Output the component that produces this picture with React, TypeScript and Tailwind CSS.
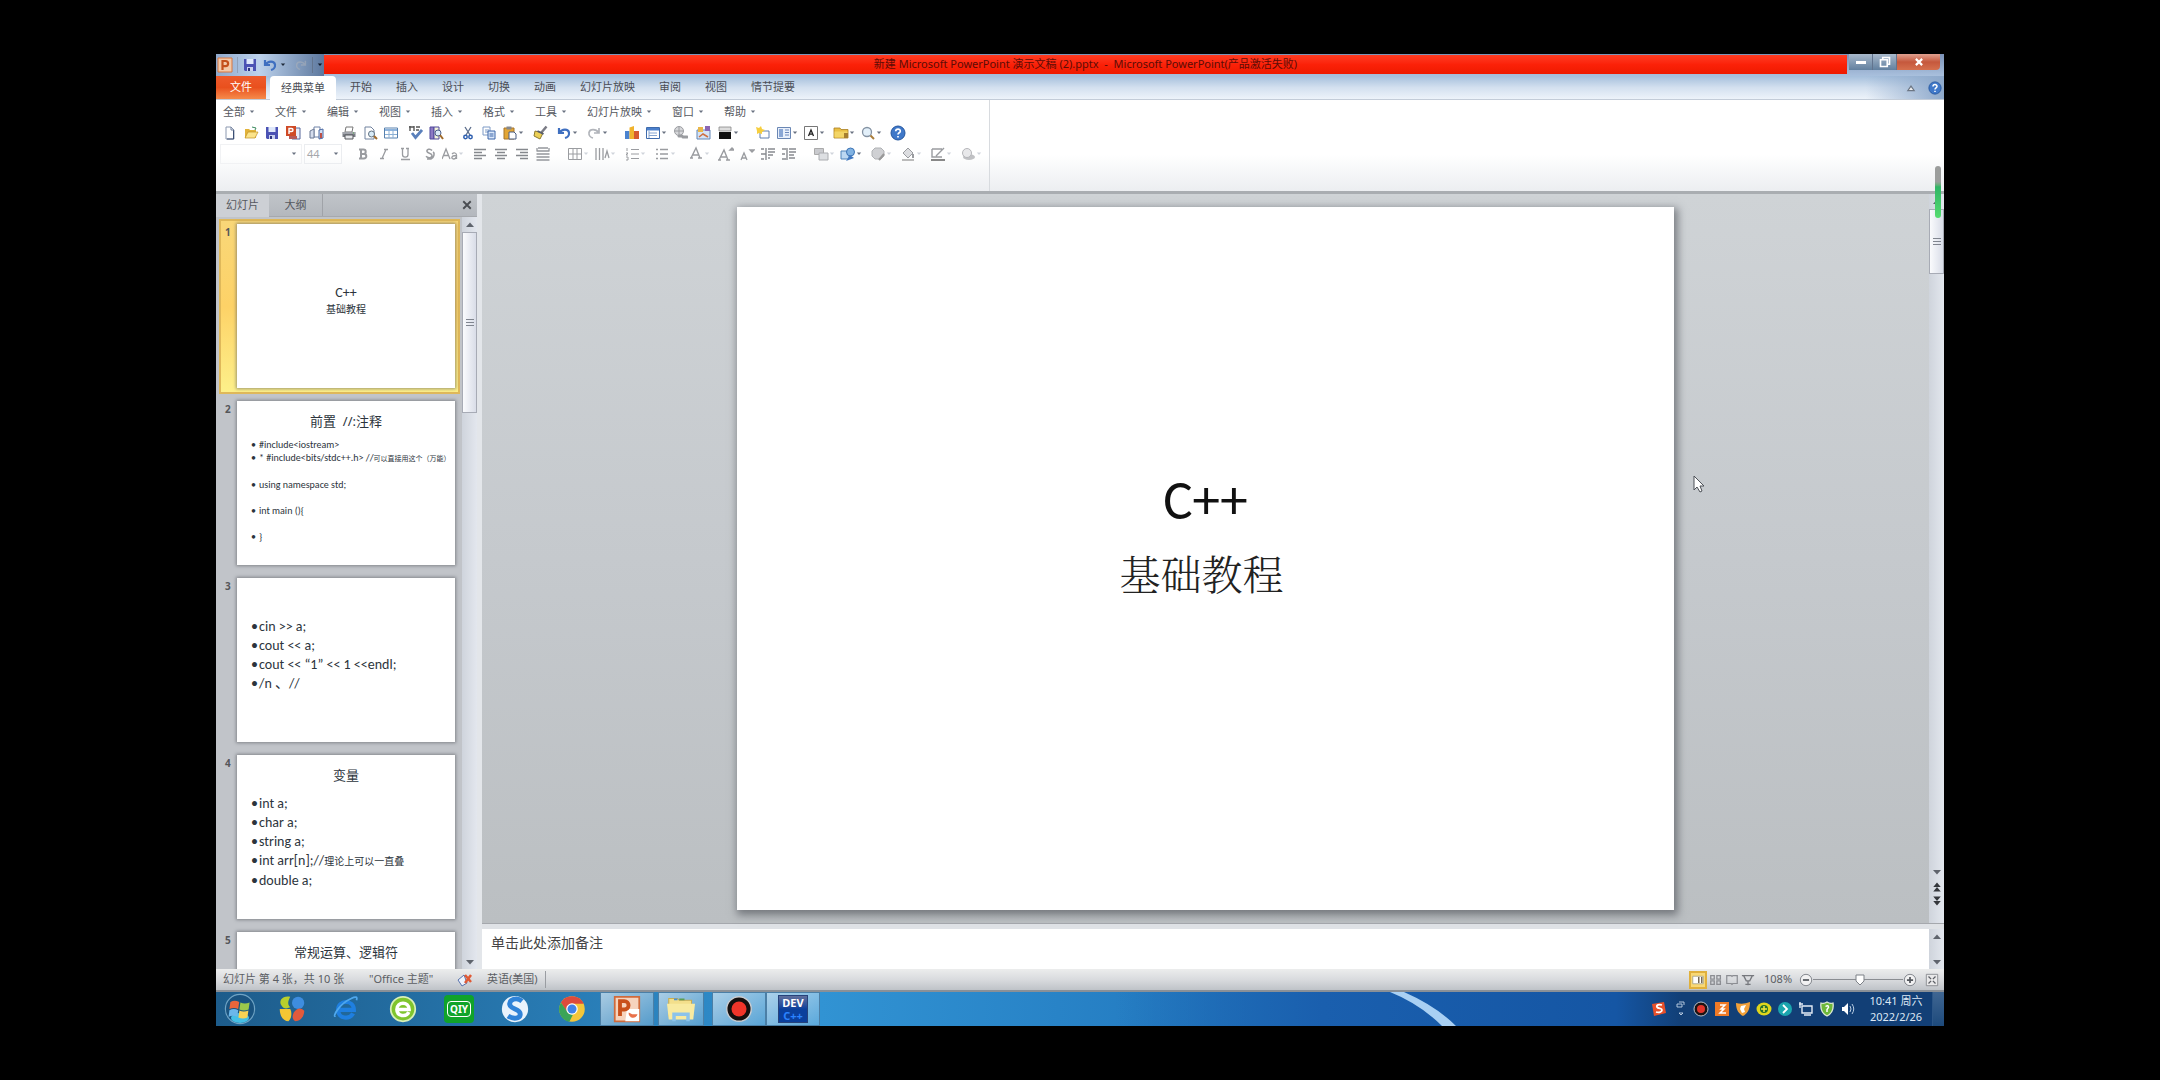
import React from "react";

type Kids = { children?: React.ReactNode };

/* ---------- small drawing helpers ---------- */

function Svg({ children, className = "h-4 w-4" }: Kids & { className?: string }) {
  return (
    <svg viewBox="0 0 16 16" className={`${className} block shrink-0`} fill="none" aria-hidden="true">
      {children}
    </svg>
  );
}

function Caret({ className = "text-gray-500" }: { className?: string }) {
  return (
    <svg viewBox="0 0 6 4" className={`block h-1 w-1.5 shrink-0 ${className}`} aria-hidden="true">
      <path d="M0.8 0.5h4.400L3 3z" fill="currentColor" />
    </svg>
  );
}

const g = "#9a9ca0";

const icons: Record<string, React.ReactNode> = {
  new: <><path d="M4 2h5l3 3v9H4z" fill="#fff" stroke="#8c99b0" /><path d="M11.5 5v9H5" stroke="#3c4f74" /><path d="M9 2v3h3" stroke="#6f7f9c" /></>,
  open: <><path d="M2 4h4l1 1h6v8H2z" fill="#e2b33a" /><path d="M2 13l3-6h10l-3 6z" fill="#fbe38a" stroke="#c08f21" strokeWidth=".7" /><path d="M9 2l4 1-1 2" stroke="#3c8a5e" /></>,
  save: <><path d="M2 2h12v12H3l-1-1z" fill="#4b52b4" /><path d="M4.500 2h7v5h-7z" fill="#dfe8fb" /><path d="M5 10h6v4H5z" fill="#c9d1ee" /><path d="M6 11h2v3H6z" fill="#2d3580" /></>,
  ppt: <><path d="M7 3h8v11H7z" fill="#e7ecf8" stroke="#56679a" /><path d="M1 1h10v10H1z" fill="#cf4a26" /><path d="M4 9V3.500h2.500a1.500 1.500 0 010 3H4" stroke="#fff" strokeWidth="1.400" /><path d="M4 11h8v3H4z" fill="#b65a58" /></>,
  publish: <><path d="M5 2h6v10H5z" fill="#fff" stroke="#7084a8" /><path d="M1 6l4-2v9H1z" fill="#d5dded" stroke="#6a7893" /><path d="M10 5l4-1v9l-4 1z" fill="#d2dff4" stroke="#4a68a3" /><path d="M12 8v5" stroke="#bd5046" strokeWidth="2" /></>,
  print: <><path d="M5 2h7l-1 5H4z" fill="#fff" stroke="#777" /><path d="M1.500 7h13v5h-13z" fill="#7b7e86" /><path d="M2 8h12" stroke="#c8cad0" /><path d="M4 10h8v4H4z" fill="#e7e8eb" stroke="#56585d" /><path d="M12 8h1" stroke="#53a84e" /></>,
  preview: <><path d="M3 2h6l3 3v9H3z" fill="#fff" stroke="#71829e" /><circle cx="9.500" cy="9" r="3" fill="#d9ecf8" stroke="#5f6f80" /><path d="M12 11l3 3" stroke="#a06a2a" strokeWidth="2" /></>,
  table: <><path d="M1.500 3h13v10h-13z" fill="#fff" stroke="#5680ae" /><path d="M2 4h12v2H2z" fill="#8eb4de" /><path d="M2 9.500h12M6 4v9M10 4v9" stroke="#8bb0d5" /></>,
  spell: <><path d="M2 2h5M3 1v5M7 1v5M9 2h4M9 5h3" stroke="#555" strokeWidth="1.400" /><path d="M5 8l3.500 4.500L15 5" stroke="#5a80bb" strokeWidth="2.800" /></>,
  research: <><path d="M2 2h4v12H2z" fill="#8c79c3" stroke="#51489b" /><path d="M6 2h5v12H6z" fill="#f3f3d9" stroke="#51489b" /><circle cx="10" cy="8" r="3" fill="#ddebfa" stroke="#4c5f88" /><path d="M12 10l3 4" stroke="#a06a2a" strokeWidth="2" /></>,
  cut: <><path d="M5 2l5 8M11 2L6 10" stroke="#5b6d8b" strokeWidth="1.300" /><circle cx="5.500" cy="12" r="1.700" stroke="#2f60b0" strokeWidth="1.500" /><circle cx="10.500" cy="12" r="1.700" stroke="#2f60b0" strokeWidth="1.500" /></>,
  copy: <><path d="M2 2h7v8H2z" fill="#fff" stroke="#7c9ac6" /><path d="M4 5h4M4 7h4" stroke="#7c9ac6" /><path d="M7 6h7v8H7z" fill="#dbe8fa" stroke="#3a64a8" /><path d="M8.500 9h4M8.500 11h4" stroke="#3a64a8" /></>,
  paste: <><path d="M2 3h10v11H2z" fill="#e3a634" stroke="#a6742a" /><path d="M4.500 1.500h5v3h-5z" fill="#85898f" /><path d="M7 7h5l2 2v5H7z" fill="#fff" stroke="#4a5d80" /></>,
  brush: <><path d="M14.500 1.500L9 8" stroke="#7a7b85" strokeWidth="2.500" /><path d="M3 6l8 2-3 6-6-3z" fill="#ecd056" stroke="#8c7a2e" /><path d="M5.500 6l6 3" stroke="#555b70" strokeWidth="1.800" /></>,
  undo: <path d="M3 3v5h5M3.500 7.500C6 4 12 3.500 13 7.500c.5 3-2 5-4 5.500" stroke="#3f6fc0" strokeWidth="2.200" />,
  redo: <path d="M13 3v5H8M12.500 7.500C10 4 4 3.500 3 7.500c-.5 3 2 5 4 5.500" stroke="#b1b4ba" strokeWidth="1.700" />,
  chart: <><path d="M1 6h4.500v8H1z" fill="#4a83cf" /><path d="M5.500 2.500l4.500-1.500v13H5.500z" fill="#f0b32d" /><path d="M10 6h5v8h-5z" fill="#d65a2e" /></>,
  table2: <><path d="M1.500 2.500h13v11h-13z" fill="#fff" stroke="#3e6bac" /><path d="M2 3h12v2.500H2z" fill="#4b80cc" /><path d="M4 8h8M4 10.500h8M4 6v7" stroke="#86a5d1" /></>,
  link: <><circle cx="7" cy="6" r="4.500" fill="#d6d7da" stroke={g} /><path d="M3 6h8M7 2v8" stroke={g} /><path d="M7 11h3m1 1h4" stroke={g} strokeWidth="3" strokeLinecap="round" /></>,
  design: <><path d="M1 5h13v9H1z" fill="#d5e4f7" stroke="#6286b5" /><path d="M2 2h5v5H2z" fill="#e9b74a" /><path d="M9 1h5v5H9z" fill="#8b66b4" /><path d="M3 12l4-3 5 3" stroke="#cd7043" strokeWidth="1.500" /></>,
  color: <><path d="M2 2h12v4H2z" fill="#ddd" stroke="#888" strokeWidth=".8" /><path d="M2 7h12v7H2z" fill="#111" /></>,
  newslide: <><path d="M5 6h9v7H5z" fill="#fff" stroke="#5e7fae" /><path d="M1 2l3 1 2-2 1 3 3 1-3 2 0 2-3-1-2 1 0-3z" fill="#f6ce3e" /></>,
  layout: <><path d="M1.500 2.500h13v11h-13z" fill="#e9f0fb" stroke="#6a87b4" /><path d="M3 4h4v8H3z" fill="#8aa7d5" /><path d="M9 5h4M9 7.500h4M9 10h4" stroke="#6c88bb" /></>,
  textbox: <><path d="M1.500 1.500h13v13h-13z" fill="#fff" stroke="#777" /><path d="M5.500 11L8 5l2.500 6M6.500 9.200h3" stroke="#222" strokeWidth="1.300" /></>,
  folder: <><path d="M1 3h6l1 1.500h7V13H1z" fill="#e9bf44" stroke="#a97f22" strokeWidth=".8" /><path d="M1.500 6.500h13v6h-13z" fill="#f3d566" /><path d="M11 8h4v5h-4z" fill="#a77f2f" /></>,
  zoom: <><circle cx="7" cy="7" r="4.500" fill="#e3f0fa" stroke="#8492a3" strokeWidth="1.300" /><path d="M10.500 10.500L14 14" stroke="#a97c3a" strokeWidth="2" /></>,
  help: <><circle cx="8" cy="8" r="7" fill="#3f78c9" stroke="#24569f" /><path d="M5.700 6.300C5.800 3.300 10.400 3.500 10.300 6.200 10.200 7.800 8 7.800 8 9.600M8 11v1.500" stroke="#fff" strokeWidth="1.700" /></>,
  bold: <path d="M4 3.500h4.500a2.100 2.100 0 010 4.400H5.500M5.500 7.900H9a2.200 2.200 0 010 4.600H4M6 3.500v9" stroke={g} strokeWidth="2" />,
  italic: <path d="M8 3.500h4M4 12.500h4M10 3.500l-4 9" stroke={g} strokeWidth="1.300" />,
  underline: <path d="M4 2.500h3M9 2.500h3M5.500 3v5.500c0 3.500 5.500 3.500 5.500 0V3M4 13.500h9" stroke={g} strokeWidth="1.300" />,
  shadow: <path d="M11 4.500C9 2 5.500 3.500 6 5.500c.5 2 5 1.500 5 4 0 2.500-4 3-6 .8M12 6c2 1 1 6-2 7H6" stroke={g} strokeWidth="1.500" />,
  aa: <path d="M0 13L4 3l4 10M1.500 9.500h5M10 8c2-2 4.500-1 4.500 1v4M14 9.500c-5 0-5 3.500-2.500 3.500 1.500 0 2.500-1 2.500-2" stroke={g} strokeWidth="1.300" />,
  left: <path d="M2 3.500h12M2 6.500h8M2 9.500h12M2 12.500h8" stroke="#85888d" strokeWidth="1.300" />,
  center: <path d="M2 3.500h12M4 6.500h8M2 9.500h12M4 12.500h8" stroke="#85888d" strokeWidth="1.300" />,
  right: <path d="M2 3.500h12M6 6.500h8M2 9.500h12M6 12.500h8" stroke="#85888d" strokeWidth="1.300" />,
  spread: <path d="M3 2h10M1.500 5h13M1.500 8h13M1.500 11h13M1.500 14h13M2 2v3M14 2v3" stroke="#94979c" strokeWidth="1.300" />,
  cells: <><path d="M1.500 2.500h13v11h-13zM1.500 8h13M6 2.500v11M10 2.500v11" stroke={g} /></>,
  columns: <path d="M2 2v12M5.500 2v12M9 2v12M11 12l2-7 2 7" stroke={g} strokeWidth="1.300" />,
  numbers: <path d="M3 2v3M2 7h2l-2 2h2M2 11h2v3H2M7 3.500h8M7 8h8M7 12.500h8" stroke={g} />,
  bullets: <path d="M2 3.500h2M2 8h2M2 12.500h2M6 3.500h8M6 8h8M6 12.500h8" stroke={g} strokeWidth="1.300" />,
  fontA: <path d="M3 12L8 2l4 10M5 9h6M2 12h3M10 12h4" stroke={g} strokeWidth="1.400" />,
  grow: <path d="M1 14L6 4l4 10M3 11h6M0 14h3M8 14h4M12 4h4l-2-2z" stroke={g} strokeWidth="1.400" />,
  shrink: <path d="M2 14l3-7 3 7M3 12h4M11 4h4l-2 2z" stroke={g} strokeWidth="1.300" />,
  outdent: <path d="M1 3h3M1 8h5M1 13h3M8 3h7M8 6h7M8 9h5M8 12h2M6 2v12" stroke="#888b90" strokeWidth="1.400" />,
  indent: <path d="M1 3h4M1 8h3M1 13h4M8 3h7M8 6h7M8 9h5M8 12h6M6 2v12" stroke="#888b90" strokeWidth="1.400" />,
  arrange: <><path d="M1.500 2.500h9v6h-9z" fill="#c9cace" stroke="#aaa" /><path d="M6 7h9v7H6z" fill="#dddfe2" stroke="#aaacb0" /></>,
  shapes: <><path d="M1 5h8v8H1z" fill="#bcd8f2" stroke="#4f83b9" /><circle cx="10.500" cy="6" r="4" fill="#82b3e2" stroke="#3d74b5" /><path d="M6 15l4-6 4 3z" fill="#3f77c0" /></>,
  styles: <><path d="M5 2h6l3 3v5l-3 3H5l-3-3V5z" fill="#cfd0d3" stroke="#b0b2b5" /><path d="M9 14l5-6" stroke="#999" strokeWidth="2" /></>,
  fill: <><path d="M8 2l5 5-5 5-5-5z" fill="#dcdde0" stroke={g} /><path d="M13 8v4" stroke={g} strokeWidth="2" /><path d="M2 14h12" stroke="#bbb" strokeWidth="2" /></>,
  outline: <><path d="M2 3h10M2 3v8h10M6 10l8-8" stroke={g} strokeWidth="1.400" /><path d="M1 14h14" stroke="#888" strokeWidth="2" /></>,
  effects: <><ellipse cx="9" cy="11" rx="6" ry="3" fill="#c0c1c4" /><circle cx="7" cy="7" r="4.500" fill="#e8e8ea" stroke="#b5b6ba" /></>,
};

type Tool = [name: string, label: string, gap: string, caret?: boolean];

const row1: Tool[] = [
  ["new", "新建", ""], ["open", "打开", "ml-[5px]"], ["save", "保存", "ml-[5px]"], ["ppt", "另存为", "ml-[5px]"], ["publish", "发布", "ml-2"],
  ["print", "打印", "ml-4"], ["preview", "打印预览", "ml-[5px]"], ["table", "表格", "ml-[5px]"], ["spell", "拼写检查", "ml-2"], ["research", "信息检索", "ml-[5px]"],
  ["cut", "剪切", "ml-4"], ["copy", "复制", "ml-[5px]"], ["paste", "粘贴", "ml-[5px]", true], ["brush", "格式刷", "ml-2"],
  ["undo", "撤消", "ml-2", true], ["redo", "恢复", "ml-2", true],
  ["chart", "图表", "ml-4"], ["table2", "插入表格", "ml-[5px]", true], ["link", "超链接", "ml-[5px]"], ["design", "幻灯片设计", "ml-2"], ["color", "颜色", "ml-[5px]", true],
  ["newslide", "新幻灯片", "ml-4"], ["layout", "版式", "ml-[5px]", true], ["textbox", "文本框", "ml-[5px]", true], ["folder", "文件夹", "ml-2", true], ["zoom", "显示比例", "ml-[5px]", true], ["help", "帮助", "ml-2"],
];

const row2: Tool[] = [
  ["bold", "加粗", ""], ["italic", "倾斜", "ml-[5px]"], ["underline", "下划线", "ml-[5px]"], ["shadow", "阴影", "ml-2"], ["aa", "更改大小写", "ml-[5px]", true],
  ["left", "左对齐", "ml-2"], ["center", "居中", "ml-[5px]"], ["right", "右对齐", "ml-[5px]"], ["spread", "分散对齐", "ml-[5px]"],
  ["cells", "对齐文本", "ml-4", true], ["columns", "文字方向", "ml-[5px]", true], ["numbers", "编号", "ml-2", true], ["bullets", "项目符号", "ml-2", true],
  ["fontA", "字体颜色", "ml-3", true], ["grow", "增大字号", "ml-2"], ["shrink", "减小字号", "ml-[5px]"], ["outdent", "减少缩进", "ml-[5px]"], ["indent", "增加缩进", "ml-[5px]"],
  ["arrange", "排列", "ml-4", true], ["shapes", "形状", "ml-[5px]", true], ["styles", "快速样式", "ml-2", true], ["fill", "形状填充", "ml-2", true], ["outline", "形状轮廓", "ml-2", true], ["effects", "形状效果", "ml-2", true],
];

function ToolButton({ tool, caretClass }: { tool: Tool; caretClass: string }) {
  const [name, label, gap, caret] = tool;
  return (
    <button type="button" aria-label={label} className={`flex shrink-0 items-center ${gap}`}>
      <Svg>{icons[name]}</Svg>
      {caret && <Caret className={caretClass} />}
    </button>
  );
}

/* ---------- title bar and ribbon ---------- */

function TitleBar() {
  return (
    <header className="flex h-[22px] shrink-0 bg-gradient-to-b from-[#7c93b8] to-[#a9c0dd]">
      <div className="flex w-[108px] shrink-0 items-center bg-gradient-to-r from-[#8fa9cc] via-[#bdd2ec] via-40% to-[#5d789e]">
        <Svg className="ml-px h-4 w-4">
          <path d="M1 1h14v14H1z" fill="#f3c9a9" stroke="#d9773e" />
          <path d="M5.500 13V4h3a2.600 2.600 0 010 5.200h-3" stroke="#c4501c" strokeWidth="2.200" />
        </Svg>
        <button type="button" aria-label="保存" className="ml-1 border-l border-slate-400 pl-1"><Svg>{icons.save}</Svg></button>
        <button type="button" aria-label="撤消" className="ml-1 flex items-center gap-0.5"><Svg>{icons.undo}</Svg><Caret className="text-gray-800" /></button>
        <button type="button" aria-label="恢复" className="ml-2 opacity-50"><Svg className="h-3.5 w-3.5">{icons.redo}</Svg></button>
        <button type="button" aria-label="自定义快速访问工具栏" className="ml-1 flex h-4 items-center border-l border-slate-500 pl-1"><Caret className="text-gray-900" /></button>
      </div>
      <h1 className="my-px mb-0.5 flex min-w-0 flex-1 items-center justify-center overflow-hidden whitespace-pre bg-gradient-to-b from-[#ff3a20] via-[#fb2108] to-[#ee1a00] text-[11px] text-[#5c0c06]">
        新建 Microsoft PowerPoint 演示文稿 (2).pptx  -  Microsoft PowerPoint(产品激活失败)
      </h1>
      <div className="flex h-4 w-[97px] shrink-0 pl-0.5 pr-1">
        <button type="button" aria-label="最小化" className="flex w-6 items-center justify-center border-r border-slate-500 bg-gradient-to-b from-[#a9b9cb] to-[#62809f]">
          <span className="h-[3px] w-2.5 bg-white" />
        </button>
        <button type="button" aria-label="还原" className="flex w-6 items-center justify-center border-r border-slate-500 bg-gradient-to-b from-[#a9b9cb] to-[#62809f]">
          <Svg className="h-3 w-3"><path d="M5 5V2h9v9h-3M2 5h9v9H2z" stroke="#fff" strokeWidth="2.200" /></Svg>
        </button>
        <button type="button" aria-label="关闭" className="flex flex-1 items-center justify-center rounded-br bg-gradient-to-b from-[#dfa08f] via-[#c5583d] to-[#d5704e]">
          <Svg className="h-2.5 w-2.5"><path d="M3 3l10 10M13 3L3 13" stroke="#fff" strokeWidth="3.500" /></Svg>
        </button>
      </div>
    </header>
  );
}

const tabs = ["开始", "插入", "设计", "切换", "动画", "幻灯片放映", "审阅", "视图", "情节提要"];
const menus = ["全部", "文件", "编辑", "视图", "插入", "格式", "工具", "幻灯片放映", "窗口", "帮助"];

function Ribbon() {
  return (
    <>
      <nav className="flex h-6 shrink-0 items-stretch border-b border-[#c3ccd8] bg-gradient-to-b from-[#a5bfdc] via-[#d3e0ef] to-[#edf3fa] text-[11px] text-[#4a4d55]">
        <button type="button" className="w-[50px] bg-gradient-to-b from-[#ee5a2b] via-[#e9501d] to-[#f58a4a] text-white">文件</button>
        <button type="button" className="-mb-px ml-1 w-[66px] rounded-t-sm bg-white">经典菜单</button>
        <div className="ml-[14px] flex flex-1 gap-6">
          {tabs.map((t) => <button type="button" key={t} className="whitespace-nowrap">{t}</button>)}
        </div>
        <div className="flex items-center gap-3 bg-gradient-to-r from-transparent to-[#8ea9cb] pl-10 pr-0.5">
          <button type="button" aria-label="折叠功能区"><Svg className="h-2.5 w-2.5"><path d="M3 12l5-7 5 7z" fill="#eee" stroke="#6c7684" strokeWidth="2" /></Svg></button>
          <button type="button" aria-label="帮助"><Svg className="h-[14px] w-[14px]">{icons.help}</Svg></button>
        </div>
      </nav>
      <section className="flex h-[91px] shrink-0 bg-gradient-to-b from-white via-white via-60% to-[#eceef1]">
        <div className="flex w-[774px] shrink-0 flex-col border-r border-[#d8dbdf]">
          <div className="flex h-6 shrink-0 items-center gap-5 pl-[7px] text-[11px] text-[#55585e]">
            {menus.map((m) => (
              <button type="button" key={m} className="flex items-center gap-1 whitespace-nowrap">
                {m}
                <Caret />
              </button>
            ))}
          </div>
          <div className="flex h-[18px] shrink-0 items-center pl-1.5">
            {row1.map((t) => <ToolButton key={t[0]} tool={t} caretClass="text-gray-500" />)}
          </div>
          <div className="flex h-6 shrink-0 items-center pl-1">
            <button type="button" aria-label="字体" className="flex h-5 w-[82px] items-center justify-end border border-[#f1f2f4] pr-1"><Caret /></button>
            <button type="button" aria-label="字号" className="ml-0.5 mr-[13px] flex h-5 w-[38px] items-center justify-between border border-[#ebedf0] px-0.5 text-[11px] text-[#a5a7ab]">44<Caret /></button>
            {row2.map((t) => <ToolButton key={t[0]} tool={t} caretClass={t[0] === "shapes" ? "text-gray-500" : "text-gray-300"} />)}
          </div>
        </div>
      </section>
    </>
  );
}

/* ---------- slide list ---------- */

function Thumb({ n, selected, children }: Kids & { n: number; selected?: boolean }) {
  return (
    <li
      className={
        selected
          ? "flex h-[175px] shrink-0 border-2 border-[#dfb85a] bg-gradient-to-b from-[#f9d778] via-[#fdd267] to-[#fdf08a] pt-[3px]"
          : "flex h-[175px] shrink-0 border-2 border-transparent pt-[3px]"
      }
    >
      <span className="w-4 shrink-0 pl-1 text-[10px] font-bold leading-4 text-[#55565a]">{n}</span>
      <div className="h-[164px] w-[218px] shrink-0 overflow-hidden bg-white text-[#2c343c] shadow-[0_0_3px_1px_rgba(80,84,90,0.55)]">{children}</div>
    </li>
  );
}

function Bullets({ items, className }: { items: React.ReactNode[]; className: string }) {
  return (
    <ul className={`whitespace-pre pl-[14px] font-[Carlito,Lato,'Noto_Sans_CJK_SC',sans-serif] ${className}`}>
      {items.map((it, i) => (
        <li key={i} className="flex">
          <span className="w-2 shrink-0">{it ? "•" : " "}</span>
          <span>{it || " "}</span>
        </li>
      ))}
    </ul>
  );
}

function VScroll({ children }: Kids) {
  return <div className="flex w-[15px] shrink-0 flex-col bg-gradient-to-r from-[#cfd4dc] to-[#e3e7ee]">{children}</div>;
}

function ScrollArrow({ down, label }: { down?: boolean; label: string }) {
  return (
    <button type="button" aria-label={label} className="flex h-[15px] shrink-0 items-center justify-center">
      <Svg className="h-2 w-2"><path d={down ? "M0 4h16L8 13z" : "M0 12h16L8 3z"} fill="#5f646d" /></Svg>
    </button>
  );
}

function Grip() {
  return (
    <span className="flex flex-col gap-0.5">
      <span className="h-px w-2 bg-[#80858f]" />
      <span className="h-px w-2 bg-[#80858f]" />
      <span className="h-px w-2 bg-[#80858f]" />
    </span>
  );
}

function SlidePanel() {
  return (
    <aside className="flex w-[261px] shrink-0 flex-col bg-[#c1c4c9]">
      <div className="flex h-[23px] shrink-0 items-stretch border-b border-[#a6a9ae] bg-gradient-to-b from-[#c0c4c9] to-[#b4b8be] text-[11px] text-[#55585e]">
        <button type="button" className="-mb-px w-[53px] bg-[#cdd0d5]">幻灯片</button>
        <button type="button" className="w-[54px] border-r border-[#a0a3a8]">大纲</button>
        <button type="button" aria-label="关闭" className="ml-auto mr-1 self-center"><Svg className="h-3 w-3"><path d="M3 3l10 10M13 3L3 13" stroke="#4a4d52" strokeWidth="2.500" /></Svg></button>
      </div>
      <div className="flex min-h-0 flex-1">
        <ol className="flex min-w-0 flex-1 flex-col gap-0.5 overflow-hidden pl-[3px] pr-0.5 pt-0.5">
          <Thumb n={1} selected>
            <div className="flex h-full flex-col items-center justify-center pb-2.5 leading-4">
              <p className="font-[Carlito,Lato,sans-serif] text-sm leading-4">C++</p>
              <p className="text-[10px]">基础教程</p>
            </div>
          </Thumb>
          <Thumb n={2}>
            <h2 className="whitespace-pre pt-3 text-center text-[13px] leading-4">前置  //:注释</h2>
            <Bullets
              className="pt-[9px] text-[10px] leading-[13px]"
              items={["#include<iostream>", <>* #include&lt;bits/stdc++.h&gt; //<span className="text-[7px]">可以直接用这个（万能）</span></>, "", "using namespace std;", "", "int main (){", "", "}"]}
            />
          </Thumb>
          <Thumb n={3}>
            <Bullets className="pt-[39px] text-sm leading-[19px]" items={["cin >> a;", "cout << a;", "cout << “1” << 1 <<endl;", "/n 、//"]} />
          </Thumb>
          <Thumb n={4}>
            <h2 className="pt-3 text-center text-[13px] leading-4">变量</h2>
            <Bullets className="pt-[11px] text-sm leading-[19px]" items={["int a;", "char a;", "string a;", <>int arr[n];//<span className="text-[10px]">理论上可以一直叠</span></>, "double a;"]} />
          </Thumb>
          <Thumb n={5}>
            <h2 className="pt-3 text-center text-[13px] leading-4">常规运算、逻辑符</h2>
          </Thumb>
        </ol>
        <VScroll>
          <ScrollArrow label="向上滚动" />
          <div className="flex h-[181px] items-center justify-center border border-[#a7abb5] bg-gradient-to-r from-[#fafbfd] to-[#d9dde8]"><Grip /></div>
          <div className="flex-1" />
          <ScrollArrow down label="向下滚动" />
        </VScroll>
      </div>
    </aside>
  );
}

/* ---------- editing area ---------- */

function Editor() {
  return (
    <main className="flex min-w-0 flex-1 flex-col">
      <div className="relative flex min-h-0 flex-1">
        <div className="flex min-w-0 flex-1 items-center justify-center bg-gradient-to-b from-[#cfd3d6] via-[#c5c9cd] to-[#bbbfc2]">
          <article className="flex aspect-[4/3] h-[96.3%] flex-col items-center justify-center bg-white pb-[42px] text-[#111] shadow-[2px_3px_8px_2px_rgba(70,74,80,0.6)]">
            <h2 className="font-[Carlito,Lato,sans-serif] text-[55px] leading-[72px]">C++</h2>
            <p className="pr-2 font-['Noto_Serif_CJK_SC','Noto_Sans_CJK_SC',serif] text-[41px] font-light leading-[72px] text-[#222]">基础教程</p>
          </article>
        </div>
        <VScroll>
          <ScrollArrow label="上移" />
          <div className="flex h-[65px] items-center justify-center border border-[#a7abb5] bg-gradient-to-r from-[#fafbfd] to-[#d9dde8]"><Grip /></div>
          <div className="flex-1" />
          <ScrollArrow down label="下移" />
          <button type="button" aria-label="上一张幻灯片" className="mt-0.5 flex justify-center"><Svg className="h-3 w-3"><path d="M3 8l5-6 5 6zM3 14l5-6 5 6z" fill="#34373c" /></Svg></button>
          <button type="button" aria-label="下一张幻灯片" className="mb-4 mt-0.5 flex justify-center"><Svg className="h-3 w-3"><path d="M3 2l5 6 5-6zM3 8l5 6 5-6z" fill="#34373c" /></Svg></button>
        </VScroll>
        <svg viewBox="0 0 12 18" className="absolute left-[82.8%] top-[38.5%] h-[18px] w-3" aria-hidden="true">
          <path d="M1 1v14l3-3 3 5 2-1-2-5h4z" fill="#fff" stroke="#4d5157" />
        </svg>
        <div className="absolute -top-7 right-[3px] h-[52px] w-1.5 rounded-full bg-gradient-to-b from-[#9b9d9c] from-30% via-[#2fb566] via-40% to-[#55dc70]" />
      </div>
      <div className="h-1.5 shrink-0 border-t border-[#a5a8ad] bg-[#dfe2e6]" />
      <div className="flex h-10 shrink-0">
        <textarea aria-label="备注" defaultValue="单击此处添加备注" className="min-w-0 flex-1 resize-none overflow-hidden bg-white px-[9px] pt-1 text-sm leading-5 text-[#444] outline-none" />
        <VScroll>
          <ScrollArrow label="备注上移" />
          <div className="flex-1" />
          <ScrollArrow down label="备注下移" />
        </VScroll>
      </div>
    </main>
  );
}

/* ---------- status bar ---------- */

function StatusBar() {
  return (
    <footer className="flex h-[23px] shrink-0 items-center border-b-2 border-[#8a9097] bg-gradient-to-b from-[#eceded] via-[#d9dbde] to-[#bfc3c8] pl-[7px] text-[11px] text-[#5b5e63]">
      <span className="w-[146px] whitespace-nowrap">幻灯片 第 4 张，共 10 张</span>
      <span className="w-[84px] whitespace-nowrap">"Office 主题"</span>
      <button type="button" aria-label="拼写检查" className="w-[34px] pl-1">
        <Svg><path d="M1 8l6-5 3 8-5 3z" fill="#eef2fb" stroke="#5672ad" /><path d="M8 3l6 7M14 3L8 11" stroke="#e05a35" strokeWidth="2.500" /></Svg>
      </button>
      <span className="w-[59px] whitespace-nowrap border-r border-[#9a9da2]">英语(美国)</span>
      <div className="flex-1" />
      <button type="button" aria-label="普通视图" className="flex h-[18px] w-[18px] items-center justify-center border-2 border-[#e0b03c] bg-[#f8d876]">
        <Svg className="h-3 w-3"><path d="M1 3h14v10H1z" fill="#fff" stroke="#998" /><path d="M8 4h2v8H8zM12 4h2v8h-2z" fill="#776a55" /></Svg>
      </button>
      <button type="button" aria-label="幻灯片浏览" className="ml-0.5"><Svg className="h-[14px] w-[14px]"><path d="M2 3h4v4H2zM9 3h4v4H9zM2 9h4v4H2zM9 9h4v4H9z" stroke="#8b8d92" strokeWidth="1.500" /></Svg></button>
      <button type="button" aria-label="阅读视图" className="ml-0.5"><Svg className="h-[14px] w-[14px]"><path d="M2 3h5l1 1 1-1h5v9H9l-1 1-1-1H2z" stroke="#8b8d92" strokeWidth="1.400" /></Svg></button>
      <button type="button" aria-label="幻灯片放映" className="ml-0.5"><Svg className="h-[14px] w-[14px]"><path d="M1 3h14M3 3l3 6h4l3-6M8 9v5M5 13h6" stroke="#77797e" strokeWidth="1.500" /></Svg></button>
      <span className="ml-[9px] w-[35px]">108%</span>
      <button type="button" aria-label="缩小"><Svg className="h-[14px] w-[14px]"><circle cx="8" cy="8" r="6.500" fill="#f1f1f2" stroke="#777b82" /><path d="M4.500 8h7" stroke="#54585e" strokeWidth="2" /></Svg></button>
      <div className="relative flex h-4 w-[90px] items-center">
        <span className="h-px w-full bg-[#8a8d92]" />
        <svg viewBox="0 0 10 12" className="absolute left-[42px] top-0.5 h-3 w-2.5" aria-hidden="true"><path d="M1 1h8v6L5 11 1 7z" fill="#fff" stroke="#7d8187" /></svg>
        <input type="range" aria-label="显示比例" min={10} max={400} defaultValue={108} className="absolute inset-0 w-full opacity-0" />
      </div>
      <button type="button" aria-label="放大"><Svg className="h-[14px] w-[14px]"><circle cx="8" cy="8" r="6.500" fill="#f1f1f2" stroke="#777b82" /><path d="M4.500 8h7M8 4.500v7" stroke="#54585e" strokeWidth="2" /></Svg></button>
      <button type="button" aria-label="适应窗口" className="ml-2 mr-[5px]"><Svg className="h-[14px] w-[14px]"><path d="M1.500 1.500h13v13h-13z" fill="#e9e9ea" stroke="#85888d" /><path d="M4 4l3 3M12 4L9 7M4 12l3-3M12 12L9 9" stroke="#5c5f65" strokeWidth="1.500" /></Svg></button>
    </footer>
  );
}

/* ---------- taskbar ---------- */

const big = "h-7 w-7";

function TaskApp({ label, className, children }: Kids & { label: string; className: string }) {
  return (
    <button type="button" aria-label={label} className={`flex h-full shrink-0 items-center justify-center ${className}`}>
      {children}
    </button>
  );
}

function Taskbar() {
  const tile = "border border-[#4b7fa6] bg-gradient-to-br from-white/60 via-white/40 to-white/20";
  return (
    <nav className="relative flex h-[34px] shrink-0 items-center overflow-hidden bg-[#2176bd]">
      <div className="absolute inset-0 bg-gradient-to-r from-[#1d5c8b] from-0% via-[#3193d3] via-35% to-[#2176bd] to-60%" />
      <div className="absolute inset-y-0 right-0 w-[48%] bg-gradient-to-r from-transparent via-[#1a5fae] via-25% to-[#1556a4] to-60%" />
      <div className="absolute inset-y-0 right-0 w-[19%] bg-gradient-to-r from-transparent to-[#123f76] to-20%" />
      <svg viewBox="0 0 90 34" className="absolute left-[67.5%] top-0 h-[34px] w-[90px]" aria-hidden="true">
        <path d="M8 0h14q32 14 52 34H60Q38 12 8 0z" fill="#a9d0f3" />
      </svg>
      <div className="relative flex h-full flex-1 items-center">
        <TaskApp label="开始" className="w-12">
          <Svg className="h-8 w-8">
            <circle cx="8" cy="8" r="7.300" fill="#195380" stroke="#6fa3c4" strokeWidth=".6" />
            <ellipse cx="8" cy="12.500" rx="4.500" ry="2.500" fill="#45bfe5" />
            <path d="M3.200 4.500q2.200-1.300 4.400 0l-.5 3.500Q5 7 2.700 8z" fill="#e9653a" />
            <path d="M8.200 4.700q2.200 1 4.600 0l-.5 3.500q-2.300 1-4.600 0z" fill="#9cc84b" />
            <path d="M2.700 8.600q2.200-1.100 4.400 0l-.5 3.300q-2.100-1.100-4.300 0z" fill="#6bb7ea" />
            <path d="M7.700 8.800q2.200 1 4.500 0l-.5 3.400q-2.200 1-4.500 0z" fill="#f8d354" />
          </Svg>
        </TaskApp>
        <TaskApp label="浏览器助手" className="w-14">
          <Svg className={big}><path d="M7 1C3 0 0 3 2 6c1 2 3 2 5 1C5 5 6 3 7 1z" fill="#b9cf2c" /><circle cx="11.500" cy="4.500" r="3.500" fill="#3e8de0" /><path d="M1 8h6c1 2 1 5-1 7-3 0-5-3-5-7z" fill="#f3c634" /><path d="M9 10q3-4 6-1c0 3-2 6-5 6-2-1-2-3-1-5z" fill="#e25a3c" /></Svg>
        </TaskApp>
        <TaskApp label="Internet Explorer" className="w-[52px]">
          <Svg className={big}><path d="M3.500 8.500h9C12.500 2.500 3.500 2.500 3.500 8.500c0 5.500 7 5.500 8.500 2" stroke="#1f7fe0" strokeWidth="2.400" /><path d="M2 12C0 13 4 5 11 2q4-2 3 1" stroke="#4fa8ee" /></Svg>
        </TaskApp>
        <TaskApp label="360浏览器" className="w-[62px]">
          <Svg className={big}><circle cx="8" cy="8" r="7" fill="#7fc52d" stroke="#d8efb9" /><path d="M4.500 8.300h7C11.500 3.500 4.500 3.500 4.500 8.300c0 4 5.500 4.500 6.800 1.500" stroke="#fff" strokeWidth="2" /></Svg>
        </TaskApp>
        <TaskApp label="爱奇艺" className="w-[50px]">
          <span className="flex h-7 w-[30px] items-center justify-center rounded-sm bg-[#10a32a]">
            <span className="rounded border border-white px-0.5 text-[10px] font-bold leading-[14px] text-white">QIY</span>
          </span>
        </TaskApp>
        <TaskApp label="搜狗浏览器" className="w-[62px]">
          <Svg className={big}><circle cx="8" cy="8" r="7.500" fill="#e9f3fc" /><path d="M12 3.500C9 1 4.500 2.500 5 5.500c.5 3 6 2 6 5.500 0 2.500-4 3-7 1" stroke="#2f83d8" strokeWidth="2.800" /></Svg>
        </TaskApp>
        <TaskApp label="Chrome" className="w-[52px]">
          <Svg className={big}><circle cx="8" cy="8" r="7.300" fill="#f4c63a" /><path d="M1.700 4.300A7.300 7.300 0 0114.700 5H8L5 9.500z" fill="#dd4a3c" /><path d="M1.700 4.300L6 10.500l2.500.8-2 4A7.300 7.300 0 011.700 4.300z" fill="#3ba457" /><circle cx="8" cy="8" r="3.300" fill="#fff" /><circle cx="8" cy="8" r="2.600" fill="#4183e8" /></Svg>
        </TaskApp>
        <TaskApp label="PowerPoint" className={`ml-0.5 w-[54px] ${tile}`}>
          <Svg className={big}><path d="M1 1h14v14H1z" fill="#f6d3bd" stroke="#cf6a3b" /><path d="M8 8h7v7H7z" fill="#fff" /><path d="M9 10a2.500 2.500 0 105 1h-3z" fill="#e9714a" /><path d="M4 12V3.500h2.500a2.300 2.300 0 010 4.800H4" stroke="#c9501b" strokeWidth="2.200" /></Svg>
        </TaskApp>
        <TaskApp label="文件资源管理器" className={`ml-1 w-[46px] ${tile}`}>
          <Svg className={big}><path d="M1 2h5l1 1h7v9H1z" fill="#f3df8b" stroke="#c8ac51" strokeWidth=".6" /><path d="M4 2.500h2" stroke="#4a90d0" /><path d="M7 2.500h3" stroke="#5c9d52" /><path d="M0 5h16l-1 9H1z" fill="#f8eaa0" /><path d="M4 15v-4h8v4" stroke="#8cc3ea" strokeWidth="2" /></Svg>
        </TaskApp>
        <TaskApp label="录屏" className={`ml-2 w-[54px] ${tile}`}>
          <Svg className={big}><circle cx="8" cy="8" r="7" fill="#15100f" stroke="#c9ccd0" strokeWidth=".8" /><circle cx="8" cy="8" r="4.300" fill="#f0352a" /></Svg>
        </TaskApp>
        <TaskApp label="Dev-C++" className={`w-[54px] ${tile}`}>
          <span className="flex h-7 w-[30px] flex-col items-center justify-center border border-[#26427a] bg-gradient-to-b from-[#5f6f9c] to-[#0a3f9c] to-50% text-[11px] font-bold leading-[13px] text-white">
            <span>DEV</span>
            <span className="text-[#2b83ff]">C++</span>
          </span>
        </TaskApp>
      </div>
      <div className="relative flex h-full items-center gap-[5px]">
        <Svg><path d="M1 3l12-2 2 11-12 3z" fill="#e8502a" /><path d="M11 4C8 3 5 4 6 6s5 1 5 3-3 3-6 2" stroke="#fff" strokeWidth="1.800" /></Svg>
        <Svg><path d="M5 3h5v3H5zM7 1h5v3M7 12h4l-2 2z" stroke="#c3d4e6" strokeWidth=".9" /></Svg>
        <Svg><circle cx="8" cy="8" r="7" fill="#1c1414" stroke="#b9bfc8" /><circle cx="8" cy="8" r="4" fill="#e1332a" /></Svg>
        <Svg><path d="M1 1h14v14H1z" fill="#ef7a26" /><path d="M6 4h5L7 8h3l-4 4h6" stroke="#fff" strokeWidth="1.500" /></Svg>
        <Svg><path d="M1 2q7 2 14-1c0 8-3 12-7 14C4 13 1 9 1 2z" fill="#f2a13a" /><path d="M6 5l5-1-2 4 1 3-3 1-2-4z" fill="#fff" /></Svg>
        <Svg><ellipse cx="8" cy="8" rx="7.500" ry="6.500" fill="#dfd51c" /><circle cx="8" cy="8" r="4" fill="#26702c" /><path d="M5 8h6M8 5v6" stroke="#f3e63a" strokeWidth="1.500" /></Svg>
        <Svg><circle cx="8" cy="8" r="7" fill="#1ba5ae" /><path d="M6 4l4 4-4 4" stroke="#fff" strokeWidth="1.800" /></Svg>
        <Svg><path d="M4 5h10v7H4zM1 3h4M2 1v6M6 14h7" stroke="#e4ecf5" strokeWidth="1.400" /></Svg>
        <Svg><path d="M8 1q3 2 6 1c1 7-2 11-6 13C4 13 1 9 2 2q3 1 6-1z" fill="#6eb83a" stroke="#e0ead8" strokeWidth="1.300" /><path d="M6.500 5.500q3-2 3 .8L8 8.500V11" stroke="#fff" strokeWidth="1.500" /></Svg>
        <Svg><path d="M2 6h2l4-4v12l-4-4H2z" fill="#fff" /><path d="M10 5q2 3 0 6M12 3q3.500 5 0 10" stroke="#b9cde3" /></Svg>
        <div className="ml-1 w-[62px] text-center text-[11px] leading-4 text-[#dde8f5]">
          <p>10:41 周六</p>
          <p>2022/2/26</p>
        </div>
        <button type="button" aria-label="显示桌面" className="h-full w-3 border-l border-[#2c5687] bg-gradient-to-b from-[#3f6692] to-[#1d4a7c]" />
      </div>
    </nav>
  );
}

export default function App() {
  return (
    <div className="flex h-screen bg-black px-[10%] py-[54px] font-['Noto_Sans','Noto_Sans_CJK_SC',sans-serif]">
      <div className="flex min-w-0 flex-1 flex-col overflow-hidden bg-[#c1c4c9]">
        <TitleBar />
        <Ribbon />
        <div className="h-[3px] shrink-0 bg-[#a9adb1]" />
        <div className="flex min-h-0 flex-1">
          <SlidePanel />
          <div className="w-[5px] shrink-0 bg-[#e3e6ea]" />
          <Editor />
        </div>
        <StatusBar />
        <Taskbar />
      </div>
    </div>
  );
}
